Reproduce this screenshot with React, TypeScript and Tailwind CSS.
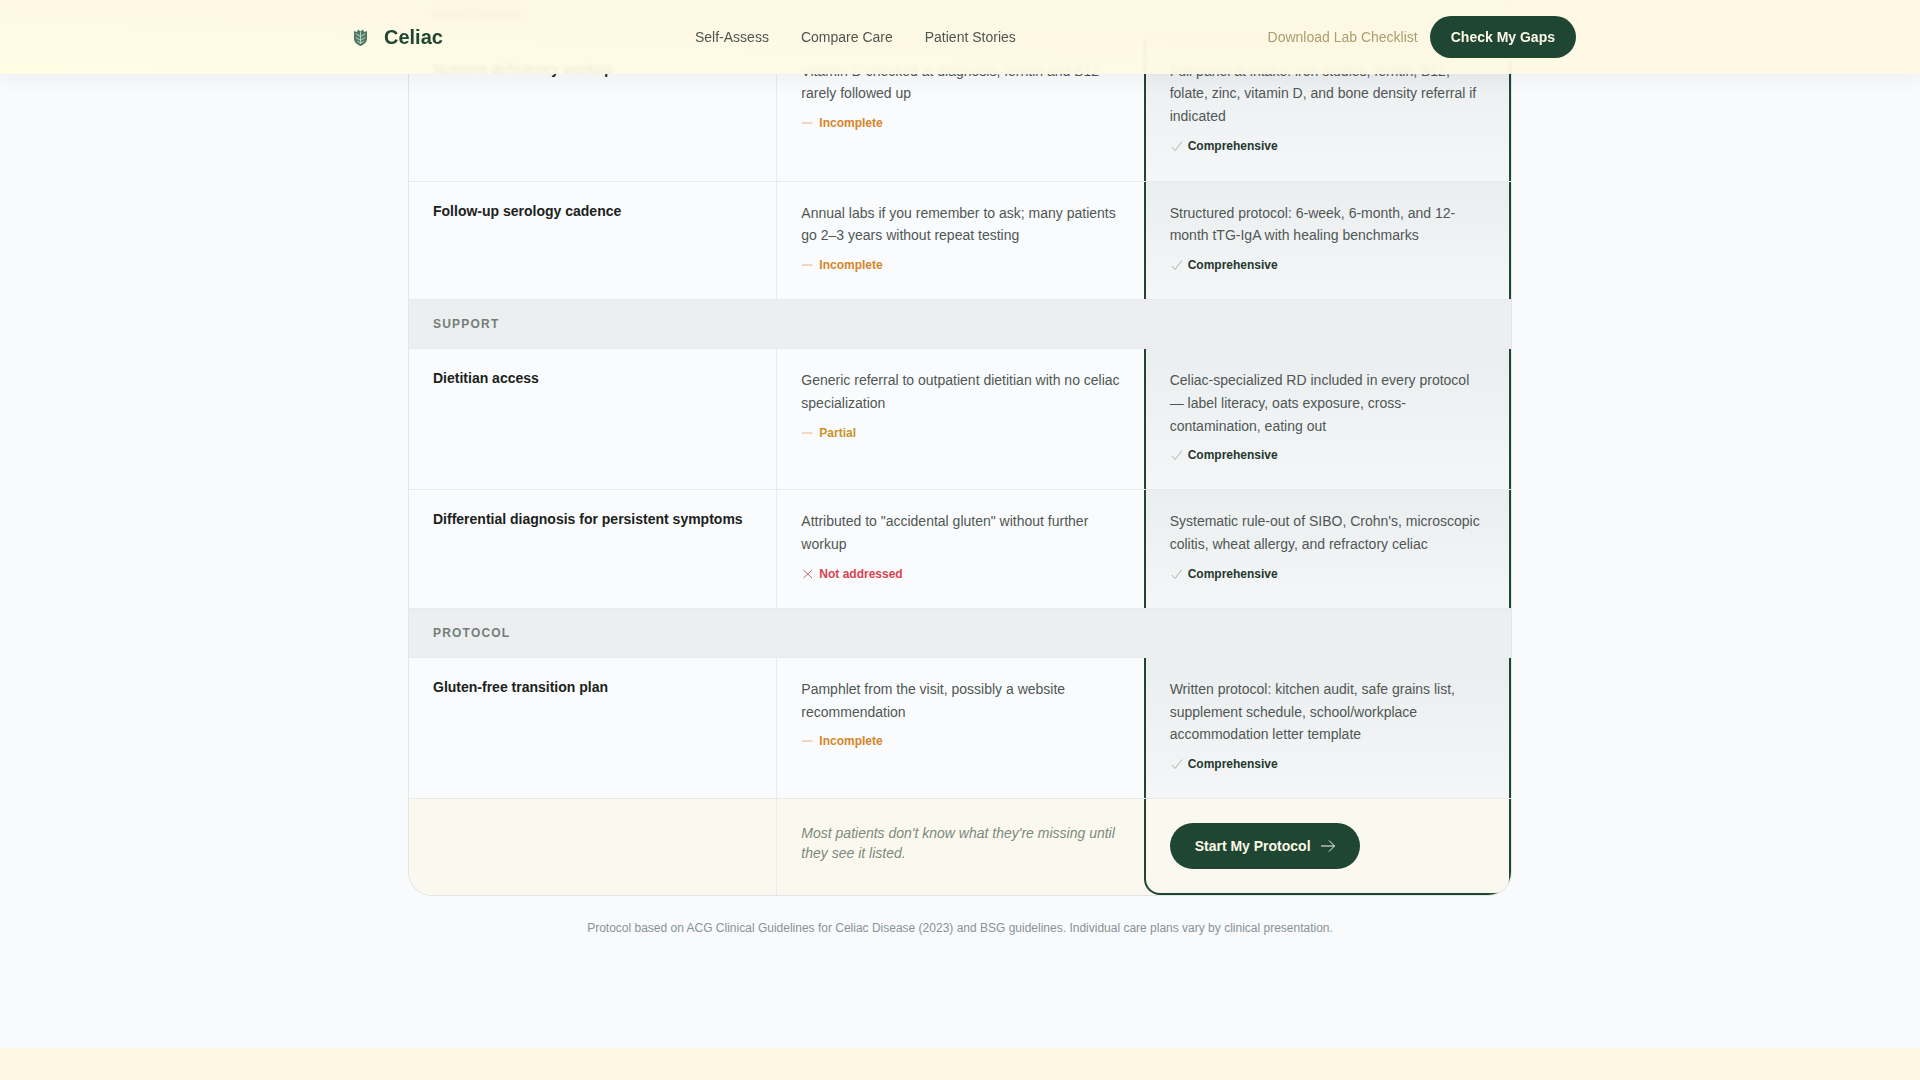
import type { ReactNode } from "react";

type Status = "incomplete" | "partial" | "none";

type Row = {
  label: string;
  standard: string;
  status: Status;
  protocol: string;
  rowClass: string;
};

type Section = { title: string; rows: Row[] };

const sections: Section[] = [
  {
    title: "Monitoring",
    rows: [
      {
        label: "Nutrient deficiency workup",
        standard: "Vitamin D checked at diagnosis; ferritin and B12 rarely followed up",
        status: "incomplete",
        protocol: "Full panel at intake: iron studies, ferritin, B12, folate, zinc, vitamin D, and bone density referral if indicated",
        rowClass: "min-h-[142.2px]",
      },
      {
        label: "Follow-up serology cadence",
        standard: "Annual labs if you remember to ask; many patients go 2–3 years without repeat testing",
        status: "incomplete",
        protocol: "Structured protocol: 6-week, 6-month, and 12-month tTG-IgA with healing benchmarks",
        rowClass: "",
      },
    ],
  },
  {
    title: "Support",
    rows: [
      {
        label: "Dietitian access",
        standard: "Generic referral to outpatient dietitian with no celiac specialization",
        status: "partial",
        protocol: "Celiac-specialized RD included in every protocol — label literacy, oats exposure, cross-contamination, eating out",
        rowClass: "",
      },
      {
        label: "Differential diagnosis for persistent symptoms",
        standard: 'Attributed to "accidental gluten" without further workup',
        status: "none",
        protocol: "Systematic rule-out of SIBO, Crohn's, microscopic colitis, wheat allergy, and refractory celiac",
        rowClass: "",
      },
    ],
  },
  {
    title: "Protocol",
    rows: [
      {
        label: "Gluten-free transition plan",
        standard: "Pamphlet from the visit, possibly a website recommendation",
        status: "incomplete",
        protocol: "Written protocol: kitchen audit, safe grains list, supplement schedule, school/workplace accommodation letter template",
        rowClass: "",
      },
    ],
  },
];

function Glyph({ children }: { children: ReactNode }) {
  return (
    <svg viewBox="0 0 12 12" className="h-3 w-3 shrink-0 overflow-visible" fill="none" stroke="currentColor" strokeWidth="1" aria-hidden="true">
      {children}
    </svg>
  );
}

function StatusBadge({ status }: { status: Status }) {
  if (status === "none") {
    return (
      <div className="mt-[10px] flex h-4 items-center gap-[6px] text-xs font-bold text-[#d6444f]">
        <span className="flex text-[#c9636c]">
          <Glyph>
            <path d="M2.500 2 L11 10 M11 2 L2.500 10" />
          </Glyph>
        </span>
        <span>Not addressed</span>
      </div>
    );
  }
  if (status === "partial") {
    return (
      <div className="mt-[10px] flex h-4 items-center gap-[6px] text-xs font-bold text-[#c9922b]">
        <span className="flex text-[#e2bd7c]">
          <Glyph>
            <path d="M0.800 6 H11.500" />
          </Glyph>
        </span>
        <span>Partial</span>
      </div>
    );
  }
  return (
    <div className="mt-[10px] flex h-4 items-center gap-[6px] text-xs font-bold text-[#d4862a]">
      <span className="flex text-[#eab27a]">
        <Glyph>
          <path d="M0.800 6 H11.500" />
        </Glyph>
      </span>
      <span>Incomplete</span>
    </div>
  );
}

function Logo() {
  return (
    <svg viewBox="0 0 16 20" className="h-[19px] w-[15px]" aria-hidden="true">
      <path d="M1 3 L4 4 L5.500 1.500 L8 3.500 L10.500 1.500 L12 4 L15 3 V11 C15 15 11.500 17.500 8 19 C4.500 17.500 1 15 1 11 Z" fill="#4f7a66" />
      <path d="M3 6 L8 9 L13 6 M3 10 L8 13 L13 10 M8 4 V17 M4.500 14 L8 16 L11.500 14" stroke="#d3e0cd" strokeWidth="0.9" fill="none" />
    </svg>
  );
}

export default function App() {
  return (
    <div className="relative flex h-screen flex-col overflow-hidden bg-[#f8fafc] font-['Liberation_Sans',Arial,sans-serif]">
      <header className="absolute inset-x-0 top-0 z-10 h-[74px] bg-[linear-gradient(to_bottom_left,rgba(254,248,227,0.95)_50%,rgba(254,253,227,0.95))] shadow-[0_4px_20px_rgba(30,40,60,0.06)] backdrop-blur-[1.5px]">
        <div className="mx-auto flex h-full w-[1232px] items-center">
          <div className="flex w-[351px] items-center gap-[16px] pl-[9px]">
            <Logo />
            <span className="text-xl font-bold text-[#1f4533]">Celiac</span>
          </div>
          <nav className="flex items-center gap-8 text-sm text-[#4f5650]">
            <a>Self-Assess</a>
            <a>Compare Care</a>
            <a>Patient Stories</a>
          </nav>
          <div className="ml-auto flex items-center gap-3">
            <a className="text-sm text-[#ab9e6f]">Download Lab Checklist</a>
            <button className="h-[42px] rounded-full bg-[#1f4533] px-[21px] text-sm font-bold text-[#fdf8e6]">
              Check My Gaps
            </button>
          </div>
        </div>
      </header>

      <main className="min-h-0 flex-1">
        <div className="mx-auto mt-[-9.5px] w-[1104px] overflow-hidden rounded-b-[24px] border border-t-0 border-[#e3e5e6]">
          {sections.map((section) => (
            <div key={section.title}>
              <div className="border-b border-[#e8eaec] bg-[#eceef0] px-6 pb-4 pt-[17px] text-xs font-bold uppercase leading-[15px] tracking-[0.1em] text-[#737e79]">
                {section.title}
              </div>
              {section.rows.map((row) => (
                <div key={row.label} className={`grid grid-cols-3 border-b border-[#e8eaec] bg-[#fafbfc] ${row.rowClass}`}>
                  <div className="px-6 pt-5 text-sm font-bold leading-[1.4] text-[#1a2220]">{row.label}</div>
                  <div className="border-l border-[#e8eaec] px-6 pb-[26px] pt-5">
                    <p className="text-sm leading-relaxed text-[#4f5755]">{row.standard}</p>
                    <StatusBadge status={row.status} />
                  </div>
                  <div className="border-x-2 border-[#1f4533] bg-gradient-to-b from-[#ebeeef] to-[#f4f6f7] px-6 pb-[26px] pt-5">
                    <p className="text-sm leading-relaxed text-[#4f5755]">{row.protocol}</p>
                    <div className="mt-[10px] flex h-4 items-center gap-[6px] text-xs font-bold text-[#24382f]">
                      <span className="flex text-[#aab6ac]">
                        <Glyph>
                          <path d="M2 7 L5 10.500 L12 1.500" />
                        </Glyph>
                      </span>
                      <span>Comprehensive</span>
                    </div>
                  </div>
                </div>
              ))}
            </div>
          ))}
          <div className="grid grid-cols-3 bg-[#fbf9ef]">
            <div />
            <div className="border-l border-[#e8eaec] px-6 pt-[25px]">
              <p className="text-sm italic leading-[1.4] text-[#7c897f]">
                Most patients don't know what they're missing until they see it listed.
              </p>
            </div>
            <div className="rounded-b-[16px] border-x-2 border-b-2 border-[#1f4533] px-6 py-6">
              <button className="flex h-[46px] items-center gap-2 rounded-full bg-[#1f4533] px-[25px] text-sm font-bold text-[#fdf8e6]">
                Start My Protocol
                <svg viewBox="0 0 16 16" className="h-4 w-4" fill="none" stroke="currentColor" strokeWidth="1" aria-hidden="true">
                  <path d="M2 8 H15.500 M10 2.500 L15.500 8 L10 13.500" />
                </svg>
              </button>
            </div>
          </div>
        </div>
        <p className="mt-6 text-center text-xs text-[#8a9296]">
          Protocol based on ACG Clinical Guidelines for Celiac Disease (2023) and BSG guidelines. Individual care plans vary by clinical presentation.
        </p>
      </main>

      <footer className="h-8 shrink-0 bg-[#fef8e3]" />
    </div>
  );
}
